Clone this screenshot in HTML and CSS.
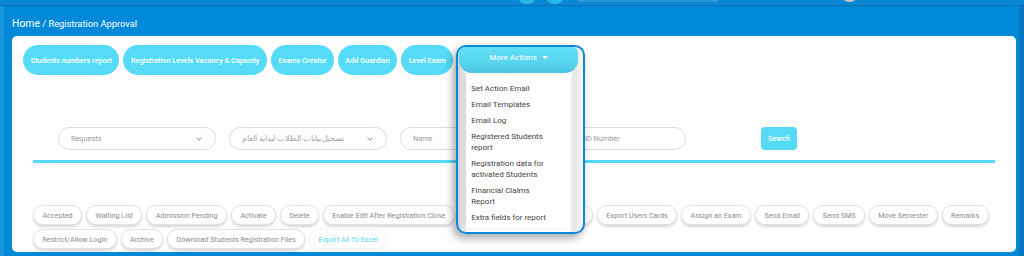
FILE: index.html
```html
<!DOCTYPE html>
<html lang="en">
<head>
<meta charset="utf-8">
<title>Registration Approval</title>
<link rel="stylesheet" href="styles.css">
</head>
<body>
<div class="topbar">
  <span class="tb-dot d1"></span>
  <span class="tb-dot d2"></span>
  <span class="tb-search"></span>
  <span class="tb-avatar"></span>
</div>
<div class="page">
  <div class="crumb"><span class="home">Home</span> / Registration Approval</div>
  <div class="card">
    <div class="toolbar">
      <button class="tbtn">Students numbers report</button>
      <button class="tbtn">Registration Levels Vacancy &amp; Capacity</button>
      <button class="tbtn">Exams Creator</button>
      <button class="tbtn">Add Guardian</button>
      <button class="tbtn">Level Exam</button>
      <div class="more">
        <button class="more-btn">More Actions <span class="caret"></span></button>
        <ul class="menu">
          <li>Set Action Email</li>
          <li>Email Templates</li>
          <li>Email Log</li>
          <li>Registered Students report</li>
          <li>Registration data for activated Students</li>
          <li>Financial Claims Report</li>
          <li>Extra fields for report</li>
        </ul>
      </div>
    </div>

    <div class="filters">
      <div class="field sel w158">Requests<span class="chev"></span></div>
      <div class="field sel w158"><span class="ar" dir="rtl">تسجيل بيانات الطلاب لبداية العام</span><span class="chev"></span></div>
      <div class="field w158">Name</div>
      <div class="field w114">ID Number</div>
      <button class="search">Search</button>
    </div>
    <div class="divider"><span class="bump"></span></div>

    <div class="actions">
      <button class="abtn">Accepted</button>
      <button class="abtn">Waiting List</button>
      <button class="abtn">Admission Pending</button>
      <button class="abtn">Activate</button>
      <button class="abtn">Delete</button>
      <button class="abtn">Enable Edit After Registration Close</button>
      <button class="abtn">Disable Edit After Registration Close</button>
      <button class="abtn">Export Users Cards</button>
      <button class="abtn">Assign an Exam</button>
      <button class="abtn">Send Email</button>
      <button class="abtn">Send SMS</button>
      <button class="abtn">Move Semester</button>
      <button class="abtn">Remarks</button>
      <button class="abtn">Restrict/Allow Login</button>
      <button class="abtn">Archive</button>
      <button class="abtn">Download Students Registration Files</button>
      <button class="abtn excel">Export All To Excel</button>
    </div>
  </div>
</div>
</body>
</html>
```
FILE: styles.css
```css
* { box-sizing: border-box; }
html, body { margin: 0; padding: 0; }
body {
  width: 1024px;
  height: 256px;
  overflow: hidden;
  background: #0089d8;
  font-family: Roboto, "Noto Sans", "Noto Sans CJK SC", sans-serif;
}
button { font-family: inherit; cursor: pointer; }

.topbar {
  position: relative;
  height: 6px;
  background: #0a86d2;
  border-bottom: 1px solid #0870b4;
}
.tb-dot {
  position: absolute;
  top: -6px;
  width: 16px; height: 10px;
  border-radius: 50%;
  background: #27b8ea;
}
.d1 { left: 519px; }
.d2 { left: 547px; }
.tb-search {
  position: absolute;
  left: 577px; top: -4px;
  width: 142px; height: 6px;
  border-radius: 3px;
  background: #2a97dc;
}
.tb-avatar {
  position: absolute;
  left: 843px; top: -6px;
  width: 13px; height: 8px;
  border-radius: 50%;
  background: #c5c5c5;
}

.page {
  height: 250px;
  padding: 0 3px 0 8px;
  border-left: 4px solid #1b97e0;
  border-right: 5px solid #0a77c0;
}

.crumb {
  color: #fff;
  font-size: 9.3px;
  height: 30px;
  padding-top: 11px;
}
.crumb .home { font-size: 10.4px; }

.card {
  background: #fff;
  border-radius: 5px;
  height: 216px;
  padding: 9px 11px 0;
}

.toolbar {
  display: flex;
  gap: 4px;
  align-items: flex-start;
}
.tbtn {
  height: 30px;
  padding: 0 7.5px;
  border: 0;
  border-radius: 15px;
  background: #55dbf6;
  color: #fff;
  font-size: 7.3px;
  font-weight: 500;
  white-space: nowrap;
}

.more {
  position: relative;
  width: 125px;
  height: 30px;
  margin-left: -1px;
}
.more-btn {
  position: absolute;
  left: 3px; top: 2px;
  width: 119px; height: 26px;
  border: 0;
  border-radius: 6px 6px 13px 13px;
  background: linear-gradient(#62e0f7, #56d3ec 70%, #4ac4de);
  color: #fff;
  font-size: 8px;
  padding: 0 0 5px;
  z-index: 3;
}
.caret {
  display: inline-block;
  margin-left: 3px;
  vertical-align: 1px;
  border-left: 3px solid transparent;
  border-right: 3px solid transparent;
  border-top: 3px solid #fff;
}
.more::before {
  content: "";
  position: absolute;
  left: 0; top: 0;
  width: 125px; height: 185px;
  border: 2px solid #0a88d8;
  border-radius: 10px;
  box-shadow: -3px 4px 8px rgba(0,0,0,0.35);
  background: linear-gradient(90deg, #cfcfcf, #f3f3f3 8px, #fff 10px, #fff 111px, #e6e6e6 116px, #f7f7f7);
  z-index: 2;
}
.menu {
  position: absolute;
  left: 10px; top: 30px;
  width: 101px; height: 153px;
  margin: 0;
  padding: 8px 18px 0 5px;
  list-style: none;
  background: #fff;
  box-shadow: -2px 0 4px rgba(0,0,0,0.12);
  z-index: 3;
  color: #444;
  font-size: 8px;
  line-height: 11px;
}
.menu li { margin-bottom: 5px; }

.filters {
  display: flex;
  align-items: center;
  gap: 13px;
  margin-top: 51px;
  padding-left: 35px;
  height: 25px;
}
.field {
  position: relative;
  height: 23px;
  border: 1px solid #dcdcdc;
  border-radius: 12px;
  color: #9a9a9a;
  font-size: 7.3px;
  line-height: 21px;
  padding: 0 12px;
  white-space: nowrap;
}
.w158 { width: 158px; }
.w114 { width: 114px; margin-left: 1px; }
.field .ar { font-size: 7.5px; display: inline-block; color: #a3a3a3; }
.chev {
  position: absolute;
  right: 14px; top: 8px;
  width: 4px; height: 4px;
  border-right: 1px solid #aaa;
  border-bottom: 1px solid #aaa;
  transform: rotate(45deg);
}
.search {
  margin-left: 62px;
  height: 23px;
  width: 36px;
  border: 0;
  border-radius: 4px;
  background: #55dbf6;
  color: #fff;
  font-size: 7px;
  font-weight: 500;
  padding: 0;
}

.divider {
  position: relative;
  margin: 9px 10px 0;
  height: 3px;
  background: #55dbf6;
}
.bump {
  position: absolute;
  left: 424px; top: 0;
  width: 120px; height: 18px;
  border-radius: 0 0 40px 40px;
  background: #4fc6df;
}

.actions {
  display: flex;
  flex-wrap: wrap;
  gap: 4px 4px;
  margin-top: 42px;
  padding-left: 10px;
  width: 970px;
}
.abtn {
  height: 20px;
  padding: 0 8.4px;
  border: 1px solid #e3e3e3;
  border-radius: 10px;
  background: #fff;
  box-shadow: 0 2px 3px rgba(0,0,0,0.16);
  color: #8c8c8c;
  font-size: 7.2px;
  white-space: nowrap;
}
.abtn.excel { color: #55d3f2; border-color: #f4f4f4; box-shadow: 0 1px 2px rgba(0,0,0,0.05); }
```
